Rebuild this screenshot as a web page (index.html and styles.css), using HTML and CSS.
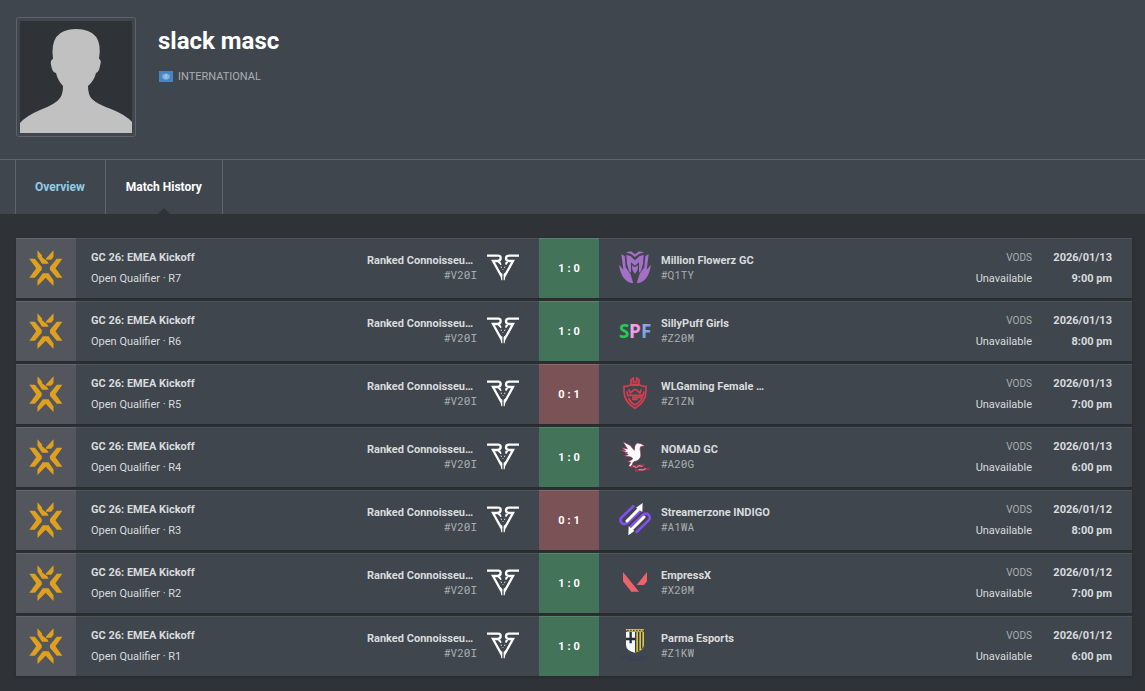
FILE: index.html
```html
<!DOCTYPE html>
<html lang="en">
<head>
    <meta charset="UTF-8">
    <meta name="viewport" content="width=device-width, initial-scale=1.0">
    <title>slack masc - Match History</title>
    <link rel="stylesheet" href="styles.css">
</head>
<body>
    <!-- shared logos -->
    <svg class="sprite" aria-hidden="true">
        <symbol id="vct" viewBox="88 57 102 110">
            <path d="M113 58 127 74 127 79 143 91 147 99 127 99 113 78ZM162 58V78L155 87H139V83ZM88 84H105L126 109V117L105 142H88L109 113ZM189 84H172L151 109V117L172 142H189L168 113ZM113 167V150L129 128H147L162 150V167L138 142Z"/>
        </symbol>
        <symbol id="ranked" viewBox="0 0 96 80">
            <path fill="none" stroke="#fff" stroke-width="7" d="M0 6H34Q41 6 41 13Q41 22 31 22H18L43 67M96 6H66Q57 6 57 14Q57 22 67 22H78L53 67"/>
            <path fill="#fff" d="M38 55 46 60V80H43ZM58 55 50 60V80H53ZM31 24H40L44 32 41 35ZM56 24H65L58 34 54 32ZM41 38 45 41 42 44ZM55 38 51 41 54 44ZM46 46H50L48 49Z"/>
        </symbol>
    </svg>

    <header class="player-header">
        <div class="avatar">
            <svg viewBox="0 0 112 112" aria-hidden="true">
                <path fill="#c1c1c1" d="M0 112V102Q6 95 20 89Q36 83 40 77Q43 73 43 65Q38 60 36 52Q32 51 31 44Q30 39 33 38Q29 8 56 8Q84 8 79 38Q82 39 80 45Q79 51 76 52Q74 60 68 65Q68 74 72 78Q77 83 91 88Q106 94 112 101V112Z"/>
            </svg>
        </div>
        <div class="player-info">
            <h1>slack masc</h1>
            <div class="country">
                <svg class="flag" viewBox="0 0 14 11" aria-hidden="true">
                    <rect width="14" height="11" fill="#4485c5"/>
                    <circle cx="7" cy="5.500" r="3" fill="#78aadb"/>
                    <path fill="none" stroke="#b4d2ec" stroke-width=".7" d="M4 3.500Q3 7 6 8.500M10 3.500Q11 7 8 8.500M5.500 4H8.500M5.500 6H8.500M7 3V8"/>
                </svg>
                <span>International</span>
            </div>
        </div>
    </header>

    <nav class="tabs">
        <a href="#overview">Overview</a>
        <a href="#matches" class="active">Match History</a>
    </nav>

    <main class="matches">
        <a class="match" href="#r7">
            <div class="thumb"><svg><use href="#vct"/></svg></div>
            <div class="event"><strong>GC 26: EMEA Kickoff</strong><span>Open Qualifier · R7</span></div>
            <div class="team"><div class="team-text"><strong>Ranked Connoisseu…</strong><span class="tag">#V20I</span></div><svg class="logo"><use href="#ranked"/></svg></div>
            <div class="score win"><span>1</span><span>:</span><span>0</span></div>
            <div class="opponent">
                <svg class="logo" viewBox="0 0 96 96" aria-hidden="true">
                    <path fill="#a56fc7" d="M0 41 13 56 7 10 17 15 20 49 34 68 43 97Q8 94 0 41ZM96 41 83 56 89 10 79 15 76 49 62 68 53 97Q88 94 96 41Z"/>
                    <path fill="#a56fc7" d="M20 4 36 1 48 10 60 1 76 4 60 9 48 18 36 9ZM22 12 34 15 48 28 62 15 74 12 72 38 66 60 60 65V34L48 44 36 34V65L30 60 24 38ZM39 43 48 49 57 43 56 57 48 69 40 57Z"/>
                </svg>
                <div class="team-text"><strong>Million Flowerz GC</strong><span class="tag">#Q1TY</span></div>
            </div>
            <div class="details"><div class="vods"><small>VODS</small><span>Unavailable</span></div><div class="date"><span>2026/01/13</span><span>9:00 pm</span></div></div>
        </a>

        <a class="match" href="#r6">
            <div class="thumb"><svg><use href="#vct"/></svg></div>
            <div class="event"><strong>GC 26: EMEA Kickoff</strong><span>Open Qualifier · R6</span></div>
            <div class="team"><div class="team-text"><strong>Ranked Connoisseu…</strong><span class="tag">#V20I</span></div><svg class="logo"><use href="#ranked"/></svg></div>
            <div class="score win"><span>1</span><span>:</span><span>0</span></div>
            <div class="opponent">
                <svg class="logo spf" viewBox="0 0 32 32" role="img">
                    <defs>
                        <linearGradient id="pink" x2="1" y2="1"><stop stop-color="#eeb6ea"/><stop offset="1" stop-color="#e784dc"/></linearGradient>
                        <linearGradient id="blue" x2="1" y2="1"><stop stop-color="#9fb9f2"/><stop offset="1" stop-color="#638bd0"/></linearGradient>
                    </defs>
                    <text x="0" y="24" fill="#27c951">S</text><text x="10" y="24" fill="url(#pink)">P</text><text x="22" y="24" fill="url(#blue)">F</text>
                </svg>
                <div class="team-text"><strong>SillyPuff Girls</strong><span class="tag">#Z20M</span></div>
            </div>
            <div class="details"><div class="vods"><small>VODS</small><span>Unavailable</span></div><div class="date"><span>2026/01/13</span><span>8:00 pm</span></div></div>
        </a>

        <a class="match" href="#r5">
            <div class="thumb"><svg><use href="#vct"/></svg></div>
            <div class="event"><strong>GC 26: EMEA Kickoff</strong><span>Open Qualifier · R5</span></div>
            <div class="team"><div class="team-text"><strong>Ranked Connoisseu…</strong><span class="tag">#V20I</span></div><svg class="logo"><use href="#ranked"/></svg></div>
            <div class="score loss"><span>0</span><span>:</span><span>1</span></div>
            <div class="opponent">
                <svg class="logo" viewBox="0 0 96 96" aria-hidden="true">
                    <path fill="none" stroke="#d93c50" stroke-width="5" d="M36 22V9L43 3V15H53V3L60 9V22M35 23Q28 29 15 28V43Q15 75 48 94Q81 75 81 43V28Q68 29 61 23ZM29 37 34 48 46 38 51 38 63 48 67 37M24 43 26 55H72L75 43M28 63Q36 78 48 84Q65 75 70 61H42V67H56"/>
                    <path fill="#d93c50" d="M35 20H61V27H35Z"/>
                </svg>
                <div class="team-text"><strong>WLGaming Female …</strong><span class="tag">#Z1ZN</span></div>
            </div>
            <div class="details"><div class="vods"><small>VODS</small><span>Unavailable</span></div><div class="date"><span>2026/01/13</span><span>7:00 pm</span></div></div>
        </a>

        <a class="match" href="#r4">
            <div class="thumb"><svg><use href="#vct"/></svg></div>
            <div class="event"><strong>GC 26: EMEA Kickoff</strong><span>Open Qualifier · R4</span></div>
            <div class="team"><div class="team-text"><strong>Ranked Connoisseu…</strong><span class="tag">#V20I</span></div><svg class="logo"><use href="#ranked"/></svg></div>
            <div class="score win"><span>1</span><span>:</span><span>0</span></div>
            <div class="opponent">
                <svg class="logo" viewBox="0 0 96 96" aria-hidden="true">
                    <path fill="#fff" stroke="#9a294c" stroke-width="2" d="M4 30 20 32 9 23 25 27 12 5 33 16 46 31Q46 12 56 9L66 11 77 17 65 20Q61 27 65 37Q70 61 43 66L37 81 29 78 35 66 25 65 39 59Q45 53 31 50L15 47 28 44 15 37 26 39Z"/>
                    <path fill="none" stroke="#b52e52" stroke-width="7" stroke-dasharray="9 1 5 1" d="M36 79 76 76M48 92 92 86"/>
                    <path fill="none" stroke="#f1dce5" stroke-width="2" d="M42 78 52 83 60 77 70 79M59 89 71 90 80 86"/>
                </svg>
                <div class="team-text"><strong>NOMAD GC</strong><span class="tag">#A20G</span></div>
            </div>
            <div class="details"><div class="vods"><small>VODS</small><span>Unavailable</span></div><div class="date"><span>2026/01/13</span><span>6:00 pm</span></div></div>
        </a>

        <a class="match" href="#r3">
            <div class="thumb"><svg><use href="#vct"/></svg></div>
            <div class="event"><strong>GC 26: EMEA Kickoff</strong><span>Open Qualifier · R3</span></div>
            <div class="team"><div class="team-text"><strong>Ranked Connoisseu…</strong><span class="tag">#V20I</span></div><svg class="logo"><use href="#ranked"/></svg></div>
            <div class="score loss"><span>0</span><span>:</span><span>1</span></div>
            <div class="opponent">
                <svg class="logo" viewBox="0 0 96 96" aria-hidden="true">
                    <path fill="none" stroke="#8250ef" stroke-width="8" stroke-linecap="round" d="M43 10 8 43Q0 52 9 61Q17 67 28 57L61 26M53 87 88 53Q97 44 88 35Q79 28 69 38L36 70"/>
                    <path fill="none" stroke="#fff" stroke-width="9" stroke-linecap="round" d="M24 54 63 15M75 42 36 81"/>
                    <path fill="#fff" d="M51 14 71 0 70 27ZM29 69 28 97 46 84Z"/>
                </svg>
                <div class="team-text"><strong>Streamerzone INDIGO</strong><span class="tag">#A1WA</span></div>
            </div>
            <div class="details"><div class="vods"><small>VODS</small><span>Unavailable</span></div><div class="date"><span>2026/01/12</span><span>8:00 pm</span></div></div>
        </a>

        <a class="match" href="#r2">
            <div class="thumb"><svg><use href="#vct"/></svg></div>
            <div class="event"><strong>GC 26: EMEA Kickoff</strong><span>Open Qualifier · R2</span></div>
            <div class="team"><div class="team-text"><strong>Ranked Connoisseu…</strong><span class="tag">#V20I</span></div><svg class="logo"><use href="#ranked"/></svg></div>
            <div class="score win"><span>1</span><span>:</span><span>0</span></div>
            <div class="opponent">
                <svg class="logo" viewBox="0 0 96 96" aria-hidden="true">
                    <path fill="#ef626b" d="M12 18 60 77H37L12 46ZM84 18V46L75 57H53Z"/>
                </svg>
                <div class="team-text"><strong>EmpressX</strong><span class="tag">#X20M</span></div>
            </div>
            <div class="details"><div class="vods"><small>VODS</small><span>Unavailable</span></div><div class="date"><span>2026/01/12</span><span>7:00 pm</span></div></div>
        </a>

        <a class="match" href="#r1">
            <div class="thumb"><svg><use href="#vct"/></svg></div>
            <div class="event"><strong>GC 26: EMEA Kickoff</strong><span>Open Qualifier · R1</span></div>
            <div class="team"><div class="team-text"><strong>Ranked Connoisseu…</strong><span class="tag">#V20I</span></div><svg class="logo"><use href="#ranked"/></svg></div>
            <div class="score win"><span>1</span><span>:</span><span>0</span></div>
            <div class="opponent">
                <svg class="logo" viewBox="0 0 96 96" aria-hidden="true">
                    <path fill="#d8c449" d="M20 0H75L72 8H24Z"/>
                    <path fill="none" stroke="#34393d" stroke-width="3" d="M24 4H71" stroke-dasharray="5 4"/>
                    <path fill="#f4f5f5" d="M21 9H48V71Q21 65 21 48Z"/>
                    <path fill="#d8c449" d="M48 9H75V48Q75 64 48 71Z"/>
                    <path stroke="#292f38" stroke-width="7" d="M35 9V32M21 30H48M35 32V43"/>
                    <path stroke="#343b42" stroke-width="4" d="M50 9V70M59 9V66M68 9V59"/>
                    <path fill="none" stroke="#383f5b" stroke-width="5" stroke-dasharray="8 3" d="M9 84H84M24 92H71"/>
                </svg>
                <div class="team-text"><strong>Parma Esports</strong><span class="tag">#Z1KW</span></div>
            </div>
            <div class="details"><div class="vods"><small>VODS</small><span>Unavailable</span></div><div class="date"><span>2026/01/12</span><span>6:00 pm</span></div></div>
        </a>
    </main>
</body>
</html>
```
FILE: styles.css
```css
* {
    margin: 0;
    padding: 0;
    box-sizing: border-box;
}

body {
    background-color: #2f3236;
    color: #dadbdd;
    font-family: Roboto, "Liberation Sans", sans-serif;
    font-size: 11px;
    line-height: 15px;
}

a {
    color: inherit;
    text-decoration: none;
}

svg {
    display: block;
}

.sprite {
    display: none;
}

/* player header */
.player-header {
    display: flex;
    gap: 22px;
    padding: 17px 16px 22px;
    background-color: #3f464d;
}

.avatar {
    width: 120px;
    height: 120px;
    padding: 3px;
    border: 1px solid #5c6369;
    border-radius: 3px;
}

.avatar svg {
    background-color: #2f3236;
}

.player-info {
    padding-top: 8px;
}

.player-info h1 {
    color: #fff;
    font-size: 24px;
    line-height: 32px;
}

.country {
    display: flex;
    align-items: center;
    gap: 5px;
    margin-top: 12px;
    padding-left: 1px;
    color: #abaeb1;
    text-transform: uppercase;
}

.flag {
    width: 14px;
    height: 11px;
}

/* tabs */
.tabs {
    display: flex;
    padding-left: 15px;
    background-color: #3f464d;
    border-top: 1px solid #5c6369;
}

.tabs a {
    position: relative;
    padding: 20px 20px 19px;
    border-right: 1px solid #5c6369;
    color: #92cbe5;
    font-size: 12px;
    font-weight: bold;
}

.tabs a:first-child {
    padding: 20px 20px 19px 19px;
    border-left: 1px solid #5c6369;
}

.tabs a.active {
    color: #fff;
}

.tabs a.active::after {
    content: "";
    position: absolute;
    bottom: 0;
    left: 50%;
    margin-left: -6px;
    border: 6px solid transparent;
    border-top: 0;
    border-bottom-color: #2f3236;
}

/* match list */
.matches {
    display: flex;
    flex-direction: column;
    gap: 3px;
    padding: 24px 13px 15px 16px;
}

.match {
    display: grid;
    grid-template-columns: 60px 1fr 183px 60px 253px 1fr;
    height: 60px;
    background-color: #3f464d;
    box-shadow: 0 1px 2px #26292d;
}

.match > div {
    border-top: 1px solid #4d5458;
}

.match .thumb {
    display: grid;
    place-items: center;
    padding-bottom: 2px;
    background-color: #53575d;
    border-color: #63676b;
}

.thumb svg {
    width: 34px;
    height: 36px;
    fill: #dea01e;
}

.event,
.vods,
.date {
    display: flex;
    flex-direction: column;
    gap: 6px;
    padding-top: 11px;
}

.event {
    padding-left: 15px;
}

.team,
.opponent {
    display: flex;
    align-items: center;
    gap: 10px;
    padding-bottom: 4px;
}

.team {
    justify-content: flex-end;
    padding-right: 20px;
}

.opponent {
    padding-left: 20px;
}

.team-text strong,
.tag {
    display: block;
}

.team .team-text {
    width: 110px;
}

.team .tag {
    text-align: right;
}

.tag {
    color: #abaeb1;
    font-family: "Roboto Mono", "Liberation Mono", monospace;
    line-height: 13px;
}

.logo {
    width: 32px;
    height: 32px;
    flex: none;
}

.spf text {
    font: bold 19px "Noto Sans", sans-serif;
}

.match .score {
    display: flex;
    align-items: center;
    justify-content: center;
    gap: 3px;
    color: #fff;
    font-weight: bold;
}

.match .win {
    background-color: #43745a;
    border-color: #568568;
}

.match .loss {
    background-color: #795355;
    border-color: #8a6668;
}

.details {
    display: flex;
    justify-content: flex-end;
    gap: 20px;
    padding-right: 20px;
    text-align: right;
}

.vods small {
    color: #abaeb1;
    font-size: 10px;
}

.date {
    width: 60px;
    font-weight: bold;
}
```
